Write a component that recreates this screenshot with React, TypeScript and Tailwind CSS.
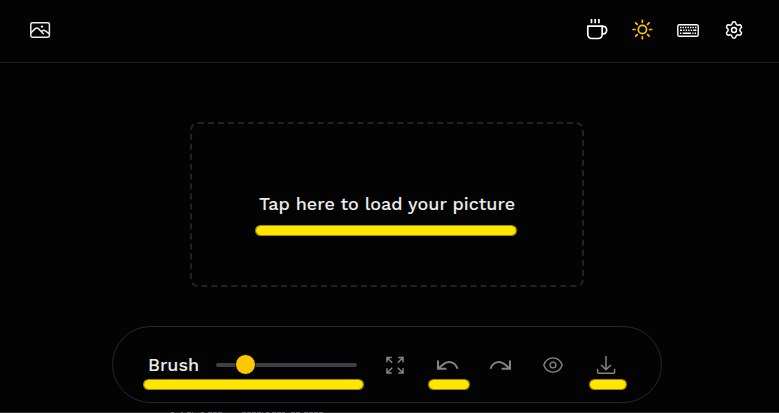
import { useState } from "react";
import type { ReactNode } from "react";
import { Settings } from "lucide-react";

function Highlight({ className }: { className: string }) {
  return (
    <span
      aria-hidden="true"
      className={`pointer-events-none absolute h-[11px] rounded-full border border-[#ffe600]/60 bg-[#ffe600] bg-clip-padding ${className}`}
    />
  );
}

function IconButton({
  label,
  className = "",
  children,
}: {
  label: string;
  className?: string;
  children: ReactNode;
}) {
  return (
    <button
      type="button"
      aria-label={label}
      className={`relative flex h-6 w-6 shrink-0 items-center justify-center ${className}`}
    >
      {children}
    </button>
  );
}

function PictureIcon() {
  return (
    <svg width="24" height="24" viewBox="0 0 24 24" fill="none" stroke="currentColor" strokeWidth="1.5" strokeLinecap="round" strokeLinejoin="round">
      <rect x="2.8" y="4.8" width="18.6" height="14.4" rx="1.6" />
      <path d="M3 14.8l4.3-4.2c.9-.8 2.1-.8 3 0l5 5.2M13.500 13.700l.9-.8c.9-.7 2-.7 2.900 0l3.800 2.800" />
      <circle cx="14" cy="8.600" r="1.200" fill="currentColor" stroke="none" />
    </svg>
  );
}

function CupIcon() {
  return (
    <svg width="24" height="24" viewBox="0 0 24 24" fill="none" stroke="currentColor" strokeWidth="1.7">
      <path d="M3.800 8.100h14.400v8.400a4 4 0 0 1-4 4H7.800a4 4 0 0 1-4-4z" />
      <path d="M18.200 8.400h1.200a3.200 3.200 0 0 1 3.200 3.200v1a3.200 3.200 0 0 1-3.200 3.200h-1.200" />
      <path d="M7.500 1v4.200M11.200 1v4.200M14.900 1v4.200" />
    </svg>
  );
}

function SunIcon() {
  return (
    <svg width="24" height="24" viewBox="0 0 24 24" fill="none" stroke="currentColor" strokeWidth="1.700" strokeLinecap="round">
      <circle cx="12.400" cy="11.500" r="4.100" />
      <path d="M12.400 2.300v1.900M12.400 18.800v1.900M3.100 11.500H5M19.700 11.500h1.900M5.700 4.900l1.500 1.500M17.600 16.700l1.500 1.500M5.700 18.200l1.500-1.500M17.600 6.400l1.500-1.500" />
    </svg>
  );
}

function KeyboardIcon() {
  return (
    <svg width="24" height="24" viewBox="0 0 24 24" fill="none" stroke="currentColor" strokeWidth="1.4">
      <rect x="1.800" y="6.700" width="20.400" height="11.600" rx="1.600" />
      <path d="M4 9.500h1.400m1.100 0h1.400m1.100 0h1.400m1.100 0h1.400m1.100 0h1.400m1.100 0h1.400m1.100 0h1.400M4 12.300h2m1.200 0h1.400m1.100 0h1.400m1.100 0h1.400m1.100 0h1.400m1.100 0h3.200M4 15.200h1.400m1.300 0h8.400m1.200 0h1.200m1.100 0H20" />
    </svg>
  );
}

function ExpandIcon() {
  return (
    <svg width="24" height="24" viewBox="0 0 24 24" fill="none" stroke="currentColor" strokeWidth="1.5">
      <path d="M5 9.200V4.500h4.700M5 4.500l5.200 5.200M16.300 4.500H21v4.700M21 4.500l-5.200 5.200M5 15.300V20h4.700M5 20l5.200-5.200M21 15.300V20h-4.700M21 20l-5.200-5.200" />
    </svg>
  );
}

function UndoIcon({ mirrored = false }: { mirrored?: boolean }) {
  return (
    <svg width="24" height="24" viewBox="0 0 24 24" fill="none" stroke="currentColor" strokeWidth="2">
      <g transform={mirrored ? "matrix(-1 0 0 1 25 0)" : undefined}>
        <path d="M3 7.400v8.400h8.400M3.300 15.500l5-4.200c4.800-4.300 12-2.400 14.200 4.500" />
      </g>
    </svg>
  );
}

function EyeIcon() {
  return (
    <svg width="24" height="24" viewBox="0 0 24 24" fill="none" stroke="currentColor" strokeWidth="1.400">
      <path d="M12 4.900c-4.600 0-7.700 3-9.200 7.100 1.500 4.100 4.600 7.100 9.200 7.100s7.700-3 9.200-7.100c-1.500-4.100-4.600-7.100-9.200-7.100z" strokeLinejoin="round" />
      <circle cx="12" cy="12" r="2.900" />
    </svg>
  );
}

function DownloadIcon() {
  return (
    <svg width="24" height="24" viewBox="0 0 24 24" fill="none" stroke="currentColor" strokeWidth="1.500" strokeLinecap="round" strokeLinejoin="round">
      <path d="M12 3.500v13M7.500 12.200l4.500 4.500 4.500-4.500M3.600 16.500v2.700a1 1 0 0 0 1 1h15a1 1 0 0 0 1-1v-2.700" />
    </svg>
  );
}

export default function App() {
  const [size, setSize] = useState(16);

  return (
    <div className="flex h-screen flex-col overflow-hidden bg-[#030303] font-['Work_Sans',Inter,sans-serif] text-[#ececec]">
      <header className="flex h-[63px] shrink-0 items-center justify-between border-b border-[#1c1c1e] pb-[3px] pl-7 pr-[33px]">
        <IconButton label="Open picture">
          <PictureIcon />
        </IconButton>
        <nav className="flex gap-[22px] text-white">
          <IconButton label="Buy a coffee">
            <CupIcon />
          </IconButton>
          <IconButton label="Toggle theme" className="text-[#ffc700]">
            <SunIcon />
          </IconButton>
          <IconButton label="Keyboard shortcuts">
            <KeyboardIcon />
          </IconButton>
          <IconButton label="Settings">
            <Settings size={20} strokeWidth={1.8} />
          </IconButton>
        </nav>
      </header>

      <main className="flex flex-1 flex-col items-center pl-4 pr-[21px] pt-[59px]">
        <button
          type="button"
          className="flex h-[165px] w-full max-w-[394px] shrink-0 items-center justify-center rounded-lg border-2 border-dashed border-[#222224] pb-0.5 text-lg font-medium"
        >
          <span className="relative">
            Tap here to load your picture
            <Highlight className="-left-1 -right-0.5 top-[35px]" />
          </span>
        </button>

        <div
          role="toolbar"
          aria-label="Brush tools"
          className="mt-[39px] flex h-[77px] w-full max-w-[550px] shrink-0 items-center justify-between rounded-full border border-[#27272d] pl-[35px] pr-[43px] text-[#858585]"
        >
          <div className="relative flex items-center gap-[17px]">
            <label htmlFor="brush" className="text-lg font-medium text-[#ececec]">
              Brush
            </label>
            <input
              id="brush"
              type="range"
              min={0}
              max={100}
              value={size}
              onChange={(event) => setSize(Number(event.target.value))}
              className="h-6 w-[141px] cursor-pointer appearance-none bg-transparent [&::-webkit-slider-runnable-track]:h-1 [&::-webkit-slider-runnable-track]:rounded-full [&::-webkit-slider-runnable-track]:bg-[#3f3f46] [&::-webkit-slider-thumb]:-mt-[9px] [&::-webkit-slider-thumb]:size-[21px] [&::-webkit-slider-thumb]:appearance-none [&::-webkit-slider-thumb]:rounded-full [&::-webkit-slider-thumb]:border [&::-webkit-slider-thumb]:border-[#030303] [&::-webkit-slider-thumb]:bg-[#ffc700]"
            />
            <Highlight className="-left-[5px] -right-[7px] top-7" />
          </div>
          <div className="flex gap-[29px]">
            <IconButton label="Fit to screen">
              <ExpandIcon />
            </IconButton>
            <IconButton label="Undo">
              <UndoIcon />
              <Highlight className="-left-[7px] -right-[11px] top-[26px]" />
            </IconButton>
            <IconButton label="Redo">
              <UndoIcon mirrored />
            </IconButton>
            <IconButton label="Show original">
              <EyeIcon />
            </IconButton>
            <IconButton label="Download">
              <DownloadIcon />
              <Highlight className="-left-[5px] -right-[9px] top-[26px]" />
            </IconButton>
          </div>
        </div>
      </main>

      <footer className="h-px shrink-0 bg-[#303034]">
        <svg className="block" width="330" height="1" stroke="#737373" aria-hidden="true">
          <path d="M171 .5H174M181 .5H183M187 .5H193M201 .5H204M208 .5H223M242 .5H263M266 .5H269M272 .5H285M291 .5H300M304 .5H323" strokeDasharray="4 1" />
        </svg>
      </footer>
    </div>
  );
}
